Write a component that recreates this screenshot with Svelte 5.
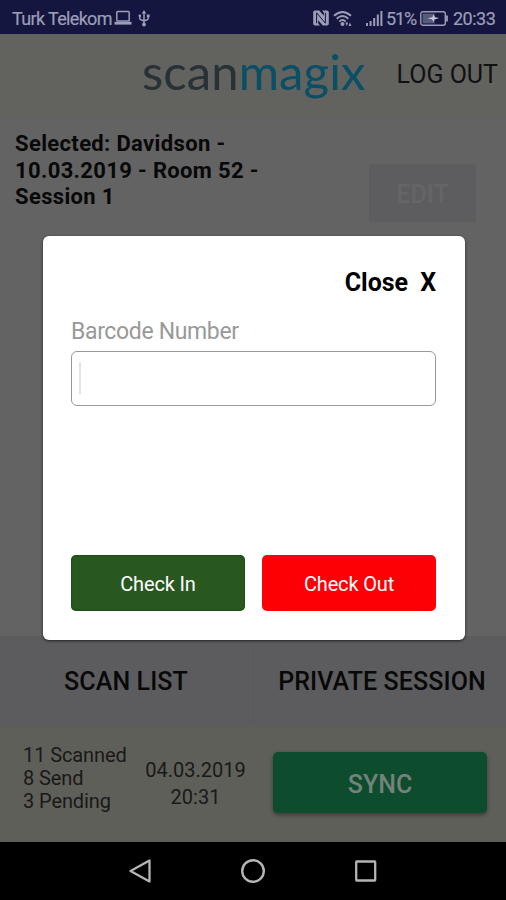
<script lang="ts">
  let barcode = $state('');

  const selected = ['Selected: Davidson -', '10.03.2019 - Room 52 -', 'Session 1'];
  const counts = ['11 Scanned', '8 Send', '3 Pending'];
</script>

<div class="screen">
  <header class="status-bar">
    <span class="carrier">Turk Telekom</span>
    <svg class="laptop" width="18" height="16" viewBox="0 0 18 16" aria-hidden="true">
      <rect x="2.8" y="1.5" width="12.4" height="9.5" rx="0.8" fill="none" stroke="currentColor" stroke-width="1.5" />
      <path d="M0.5 11.8h17v2.8h-17z" fill="currentColor" />
    </svg>
    <svg class="usb" width="12" height="17" viewBox="0 0 12 17" aria-hidden="true">
      <path d="M6 3v11M1.8 6v2.2q0 1.6 1.8 1.8L6 11M10.2 6v2.2q0 1.4-1.8 1.8L6 11" fill="none" stroke="currentColor" stroke-width="1.5" />
      <path d="M6 0l2.3 3.6H3.7zM8.8 4.5h2.8V7.2H8.8z" fill="currentColor" />
      <circle cx="1.8" cy="5.8" r="1.4" fill="currentColor" />
      <circle cx="6" cy="14.5" r="1.9" fill="currentColor" />
    </svg>

    <div class="status-right">
      <svg class="nfc" width="16" height="16" viewBox="0 0 16 16" aria-hidden="true">
        <path d="M2 0.5h4.2l4.6 5.2V2.6L9 0.5h5q1.8 0 1.8 1.8v11.4q0 1.8-1.8 1.8H9.8L5.2 10.3v3.1L7 15.5H2Q0.2 15.5 0.2 13.7V2.3Q0.2 0.5 2 0.5z" fill="currentColor" />
        <path d="M3.6 13.2V2.8l8.8 10.4V2.8" fill="none" stroke="#14163f" stroke-width="1" />
      </svg>
      <svg class="wifi" width="20" height="17" viewBox="0 0 20 17" aria-hidden="true">
        <path d="M1 5.8Q9.5-1.8 18 5.8M3.7 8.8Q9.5 3.4 15.3 8.8M6.3 11.6Q9.5 8.5 12.7 11.6" fill="none" stroke="currentColor" stroke-width="1.9" />
        <circle cx="9.5" cy="14" r="2" fill="currentColor" />
        <path d="M12.4 12.6h2.8l-1.4 3.4zM15.6 16h2.8L17 12.6z" fill="currentColor" />
      </svg>
      <svg class="signal" width="17" height="16" viewBox="0 0 17 16" aria-hidden="true">
        <path d="M1 13v3M4.6 11v5M8.2 8v8M11.8 4.5V16M15.4 1v15" stroke="currentColor" stroke-width="2" />
      </svg>
      <span class="percent">51%</span>
      <svg class="battery" width="28" height="15" viewBox="0 0 28 15" aria-hidden="true">
        <rect x="0.8" y="0.8" width="24.5" height="13.4" rx="2" fill="none" stroke="currentColor" stroke-width="1.4" />
        <rect x="2.6" y="2.6" width="12" height="9.8" fill="currentColor" opacity="0.5" />
        <path d="M7.5 7.6l5-1.5.8-2.9 1.8 3 4.1.9-4.7 1.3-1 2.7-1.6-2.8z" fill="#c2c3d4" />
        <path d="M27 4.5v6" stroke="currentColor" stroke-width="1.8" />
      </svg>
      <span class="clock">20:33</span>
    </div>
  </header>

  <div class="app-bar">
    <div class="logo">scan<span>magix</span></div>
    <button class="logout">LOG OUT</button>
  </div>

  <main class="content">
    <p class="selected">
      {#each selected as line}
        <span>{line}</span>
      {/each}
    </p>
    <button class="edit" disabled>EDIT</button>
  </main>

  <div class="tabs">
    <button class="tab">SCAN LIST</button>
    <button class="tab">PRIVATE SESSION</button>
  </div>

  <footer class="sync-bar">
    <div class="counts">
      {#each counts as count}
        <div>{count}</div>
      {/each}
    </div>
    <div class="last-sync">04.03.2019<br />20:31</div>
    <button class="sync">SYNC</button>
  </footer>

  <nav class="nav-bar">
    <svg width="24" height="26" viewBox="0 0 24 26" aria-label="Back">
      <path d="M21.5 2.5v21L2.5 13z" fill="none" stroke="currentColor" stroke-width="2.3" stroke-linejoin="round" />
    </svg>
    <svg width="26" height="26" viewBox="0 0 26 26" aria-label="Home">
      <circle cx="13" cy="13" r="10.8" fill="none" stroke="currentColor" stroke-width="2.4" />
    </svg>
    <svg width="24" height="26" viewBox="0 0 24 26" aria-label="Recent">
      <rect x="2.2" y="3.5" width="19" height="19" rx="0.5" fill="none" stroke="currentColor" stroke-width="2.3" />
    </svg>
  </nav>

  <div class="modal" role="dialog" aria-label="Barcode Number">
    <button class="close"><span>Close</span><span>X</span></button>
    <label for="barcode">Barcode Number</label>
    <div class="field">
      <span class="caret"></span>
      <input id="barcode" type="text" bind:value={barcode} />
    </div>
    <div class="actions">
      <button class="check-in">Check In</button>
      <button class="check-out">Check Out</button>
    </div>
  </div>
</div>

<style>
  :global(body) {
    margin: 0;
    background: #636363;
  }

  .screen {
    position: relative;
    width: 506px;
    height: 900px;
    overflow: hidden;
    display: flex;
    flex-direction: column;
    background: #636363;
    color: #080808;
    font-family: Roboto, sans-serif;
  }

  button {
    border: 0;
    padding: 0;
    background: none;
    color: inherit;
    font: inherit;
    white-space: nowrap;
  }

  svg {
    display: block;
    flex: none;
  }

  .status-bar {
    height: 34px;
    box-sizing: border-box;
    padding: 2px 10px 0 12px;
    display: flex;
    align-items: center;
    background: #14163f;
    color: #9c9db7;
    font-size: 18px;
  }

  .carrier {
    width: 102px;
    white-space: nowrap;
    letter-spacing: -0.65px;
    -webkit-text-stroke: 0.2px currentColor;
  }

  .usb {
    margin-left: 6px;
  }

  .status-right {
    margin-left: auto;
    display: flex;
    align-items: center;
    -webkit-text-stroke: 0.2px currentColor;
  }

  .wifi {
    margin-left: 4px;
  }

  .signal {
    margin-left: 13px;
  }

  .percent {
    width: 32px;
    margin-left: 3px;
    letter-spacing: -1.1px;
  }

  .battery {
    margin-left: 2px;
  }

  .clock {
    width: 43px;
    margin-left: 5px;
    letter-spacing: -0.5px;
  }

  .app-bar {
    height: 84px;
    box-sizing: border-box;
    padding: 0 8px 5px 142px;
    display: flex;
    align-items: center;
    justify-content: space-between;
    background: #62625f;
  }

  .logo {
    padding-bottom: 5px;
    color: #283236;
    font-family: Lato, sans-serif;
    font-size: 49px;
    line-height: 54px;
    letter-spacing: 0.1px;
  }

  .logo span {
    color: #094f65;
  }

  .logout {
    color: #111;
    font-size: 25px;
    padding-top: 2px;
  }

  .content {
    flex: 1;
    padding: 13px 30px 0 15px;
    display: flex;
    justify-content: space-between;
    align-items: flex-start;
  }

  .selected {
    margin: 0;
    font-size: 22px;
    font-weight: 700;
    line-height: 26.7px;
    letter-spacing: 0.35px;
  }

  .selected span {
    display: block;
  }

  .edit {
    width: 107px;
    height: 58px;
    margin-top: 33px;
    padding-top: 2px;
    border-radius: 3px;
    background: #5d5d5f;
    color: #656567;
    font-size: 25px;
    font-weight: 500;
  }

  .tabs {
    height: 91px;
    display: grid;
    grid-template-columns: 1fr 1fr;
    background: #5c5c5e;
  }

  .tab {
    padding-right: 1px;
    padding-bottom: 1px;
    font-size: 25px;
    font-weight: 500;
    letter-spacing: 0.1px;
  }

  .tab + .tab {
    border-left: 1px solid #59595b;
    padding-left: 5px;
  }

  .sync-bar {
    height: 115px;
    box-sizing: border-box;
    padding: 0 19px 0 23px;
    display: flex;
    background: #5f5f59;
    color: #191918;
    font-size: 20px;
  }

  .counts {
    width: 111px;
    padding-top: 17px;
    line-height: 23px;
    letter-spacing: -0.1px;
  }

  .last-sync {
    width: 123px;
    padding-top: 30px;
    line-height: 27px;
    text-align: center;
  }

  .sync {
    width: 214px;
    height: 61px;
    margin: 25px 0 0 auto;
    padding-top: 3px;
    border-radius: 5px;
    background: #0d4c2d;
    color: #75827b;
    box-shadow: 0 2px 4px rgba(0, 0, 0, 0.4);
    font-size: 25px;
    font-weight: 500;
  }

  .nav-bar {
    height: 58px;
    display: flex;
    justify-content: center;
    align-items: center;
    gap: 88px;
    background: #000;
    color: #b4b4b4;
  }

  .modal {
    position: absolute;
    top: 236px;
    left: 43px;
    width: 422px;
    height: 404px;
    box-sizing: border-box;
    padding: 31px 29px 29px 28px;
    display: flex;
    flex-direction: column;
    border-radius: 6px;
    background: #fff;
    box-shadow: 0 1px 3px rgba(0, 0, 0, 0.65);
  }

  .close {
    align-self: flex-end;
    display: flex;
    gap: 12px;
    color: #000;
    font-size: 25px;
    font-weight: 700;
    line-height: 32px;
  }

  label {
    margin-top: 19px;
    color: #999;
    font-size: 23px;
    line-height: 28px;
    letter-spacing: -0.35px;
  }

  .field {
    height: 55px;
    box-sizing: border-box;
    margin-top: 5px;
    padding: 10px 7px;
    display: flex;
    border: 1.5px solid #999;
    border-radius: 6px;
  }

  .caret {
    width: 2px;
    height: 32px;
    background: #e4e4e4;
  }

  input {
    flex: 1;
    min-width: 0;
    border: 0;
    padding: 0;
    outline: 0;
    background: transparent;
    font: inherit;
    font-size: 22px;
  }

  .actions {
    margin-top: auto;
    display: grid;
    grid-template-columns: 1fr 1fr;
    gap: 17px;
  }

  .actions button {
    height: 56px;
    padding-top: 2px;
    border-radius: 5px;
    color: #fff;
    font-size: 20px;
    letter-spacing: -0.15px;
  }

  .check-in {
    background: #28581f;
    box-shadow: inset 0 0 2px #063800;
  }

  .check-out {
    background: #fd0006;
  }
</style>
